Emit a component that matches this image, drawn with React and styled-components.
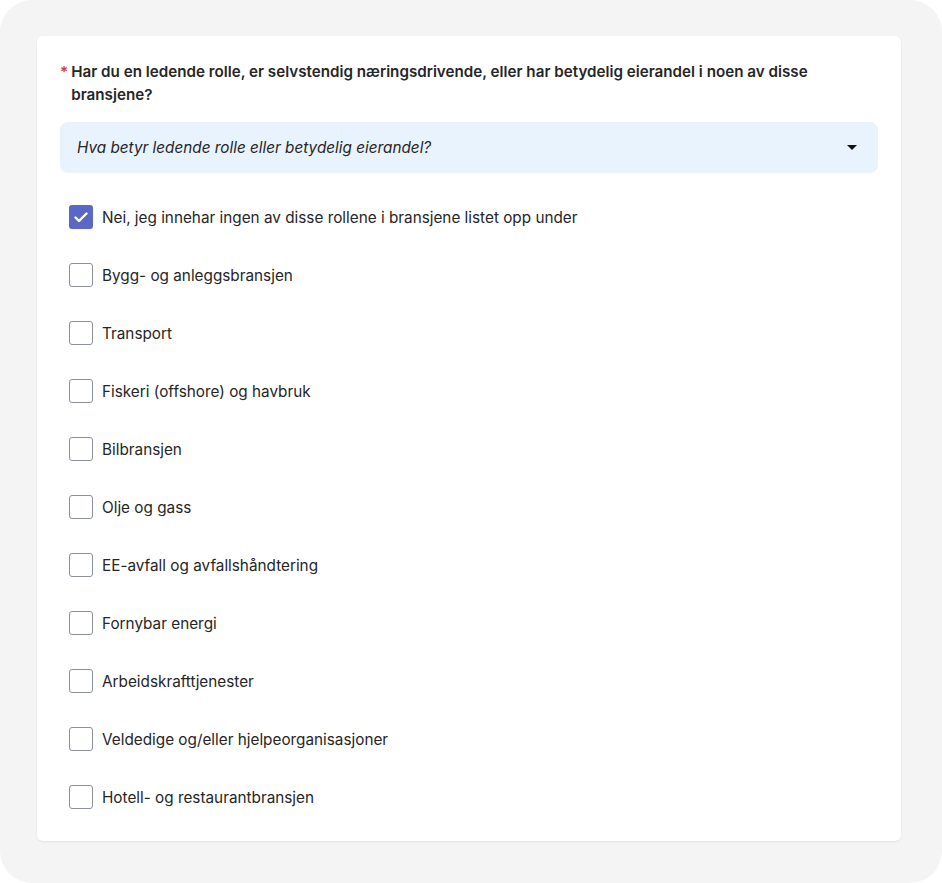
import { useState } from "react";
import styled, { createGlobalStyle } from "styled-components";

const GlobalStyle = createGlobalStyle`
  html, body {
    margin: 0;
    padding: 0;
    background: #ffffff;
  }
  body {
    font-family: "Inter", "Liberation Sans", sans-serif;
    color: #1f1f1f;
  }
`;

const Frame = styled.div`
  width: 942px;
  height: 883px;
  box-sizing: border-box;
  background: #f4f4f4;
  border-radius: 32px;
  padding: 36px 41px 0 37px;
`;

const Card = styled.div`
  background: #ffffff;
  border-radius: 6px;
  box-shadow: 0 1px 2px rgba(0, 0, 0, 0.08);
  padding: 24px 23px 32px 23px;
  box-sizing: border-box;
  height: 805px;
`;

const Question = styled.h2`
  display: flex;
  gap: 3px;
  margin: 0;
  font-size: 15.2px;
  font-weight: 600;
  line-height: 23px;
  color: #262626;
`;

const Required = styled.span`
  color: #d3412f;
  font-weight: 600;
`;

const Info = styled.button`
  margin-top: 16px;
  width: 100%;
  height: 51px;
  border: none;
  border-radius: 8px;
  background: #e9f3fd;
  display: flex;
  align-items: center;
  justify-content: space-between;
  padding: 0 21px 0 17px;
  font-family: inherit;
  font-size: 15.3px;
  font-style: italic;
  color: #262626;
  cursor: pointer;
`;

const Caret = styled.span`
  width: 0;
  height: 0;
  border-left: 5px solid transparent;
  border-right: 5px solid transparent;
  border-top: 5px solid #111;
`;

const List = styled.div`
  display: flex;
  flex-direction: column;
  gap: 34px;
  margin-top: 32px;
  padding-left: 9px;
`;

const Option = styled.label`
  display: flex;
  align-items: center;
  gap: 9px;
  font-size: 15.3px;
  color: #262626;
  cursor: pointer;
  height: 24px;
`;

const Box = styled.span`
  width: 24px;
  height: 24px;
  box-sizing: border-box;
  border-radius: 3px;
  flex: none;
  display: flex;
  align-items: center;
  justify-content: center;
  border: ${p => (p.$checked ? "none" : "1.5px solid #8c9099")};
  background: ${p => (p.$checked ? "#5b67c4" : "#ffffff")};
`;

const options = [
  "Nei, jeg innehar ingen av disse rollene i bransjene listet opp under",
  "Bygg- og anleggsbransjen",
  "Transport",
  "Fiskeri (offshore) og havbruk",
  "Bilbransjen",
  "Olje og gass",
  "EE-avfall og avfallshåndtering",
  "Fornybar energi",
  "Arbeidskrafttjenester",
  "Veldedige og/eller hjelpeorganisasjoner",
  "Hotell- og restaurantbransjen",
];

const App = () => {
  const [checked, setChecked] = useState([0]);

  const toggle = (i) => {
    setChecked(c => (c.includes(i) ? c.filter(x => x !== i) : [...c, i]));
  };

  return (
    <>
      <GlobalStyle />
      <Frame>
        <Card>
          <Question>
            <Required>*</Required>
            <span>
              Har du en ledende rolle, er selvstendig næringsdrivende, eller har betydelig eierandel i noen av disse bransjene?
            </span>
          </Question>
          <Info>
            <span>Hva betyr ledende rolle eller betydelig eierandel?</span>
            <Caret />
          </Info>
          <List>
            {options.map((text, i) => (
              <Option key={text} onClick={() => toggle(i)}>
                <Box $checked={checked.includes(i)}>
                  {checked.includes(i) && (
                    <svg width="14" height="11" viewBox="0 0 14 11" fill="none">
                      <path d="M1.5 5.5 L5 9 L12.5 1.5" stroke="#fff" strokeWidth="2.4" strokeLinecap="round" strokeLinejoin="round" />
                    </svg>
                  )}
                </Box>
                <span>{text}</span>
              </Option>
            ))}
          </List>
        </Card>
      </Frame>
    </>
  );
};

export default App;
